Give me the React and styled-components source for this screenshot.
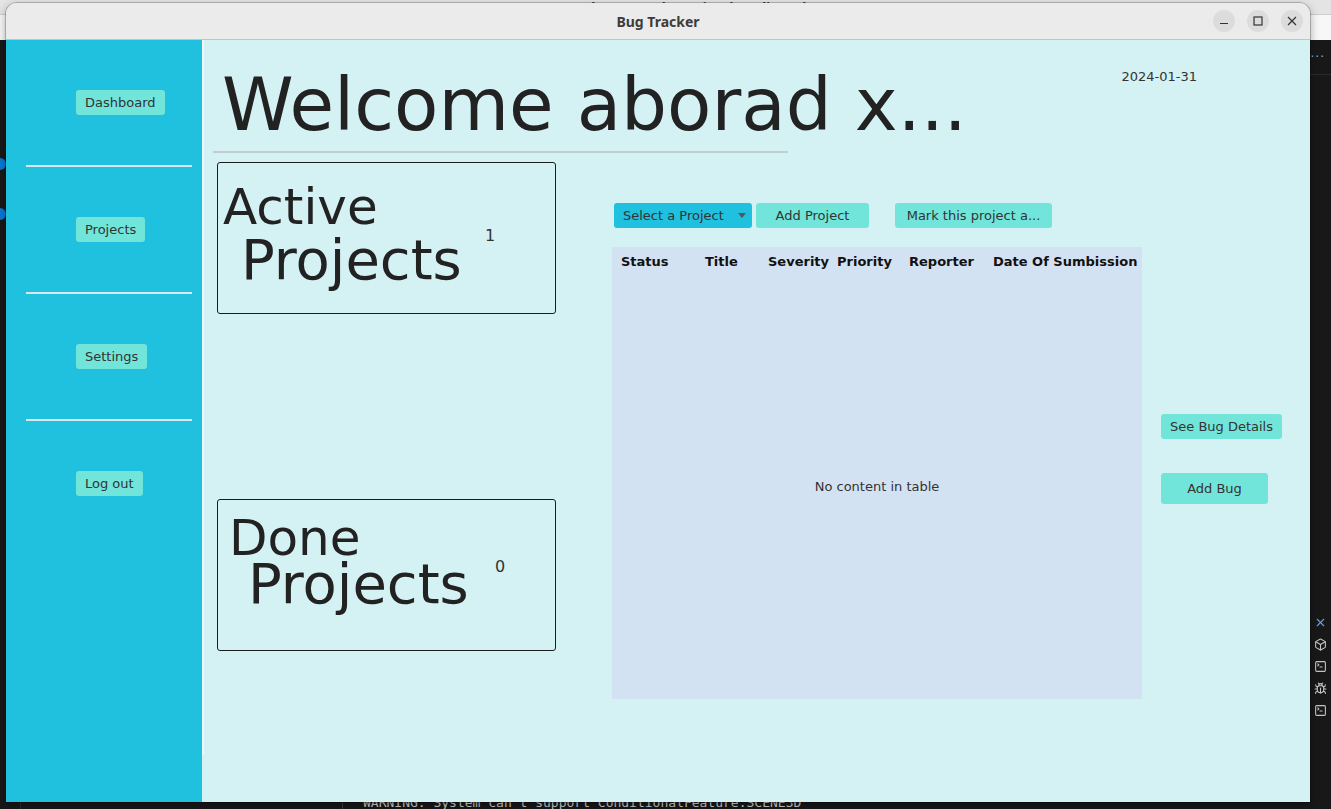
import React from "react";
import styled, { createGlobalStyle } from "styled-components";
import { X, Box, SquareTerminal, Bug } from "lucide-react";

const GlobalStyle = createGlobalStyle`
  html, body {
    margin: 0;
    padding: 0;
  }
  body {
    font-family: "DejaVu Sans", "Liberation Sans", sans-serif;
    background: #1f1f1f;
  }
`;

/* desktop behind the app window (editor window) */
const Desktop = styled.div`
  position: relative;
  width: 1331px;
  height: 809px;
  overflow: hidden;
  display: flex;
  flex-direction: column;
  background: #1f1f1f;
`;

const HostTitle = styled.div`
  height: 14px;
  flex: none;
  background: #e4e4e4;
  border-bottom: 1px solid #cdcdcd;
  text-align: center;
  font-family: "Noto Sans", sans-serif;
  font-weight: 700;
  font-size: 13px;
  line-height: 14px;
  color: #3a3a3a;
  overflow: hidden;

  span {
    display: inline-block;
    margin-top: -10px;
  }
`;

const HostMenu = styled.div`
  height: 25px;
  flex: none;
  background: #f7f7f7;
`;

const HostMain = styled.div`
  flex: 1;
  display: flex;
  min-height: 0;
`;

const ActivityBar = styled.div`
  width: 20px;
  flex: none;
  background: #181818;
  border-right: 1px solid #2b2b2b;
  display: flex;
  flex-direction: column;
  align-items: flex-start;
  gap: 38px;
  padding-top: 118px;
`;

const Badge = styled.div`
  width: 12px;
  height: 12px;
  border-radius: 50%;
  margin-left: -6px;
  background: #0a78d4;
`;

const EditorCol = styled.div`
  flex: 1;
  display: flex;
  flex-direction: column;
`;

const TabBar = styled.div`
  height: 34px;
  flex: none;
  background: #181818;
  border-bottom: 1px solid #2b2b2b;
  display: flex;
  justify-content: flex-end;
  align-items: center;
  padding-right: 6px;
  color: #8fa8c8;
  font-size: 12px;
  letter-spacing: 1px;
`;

const CodeArea = styled.div`
  flex: 1;
  display: flex;
`;

const CodeFill = styled.div`
  flex: 1;
`;

const RightRail = styled.div`
  width: 21px;
  flex: none;
  display: flex;
  flex-direction: column;
  align-items: center;
  gap: 9px;
  padding-top: 541px;
  color: #c5c5c5;
  background: #181818;
`;

const TerminalLine = styled.div`
  padding-left: 321px;
  height: 14px;
  flex: none;
  font-family: "DejaVu Sans Mono", "Liberation Mono", monospace;
  font-size: 13px;
  line-height: 16px;
  color: #cccccc;
  white-space: nowrap;
  background: #181818;
  overflow: hidden;

  span {
    display: inline-block;
    padding-left: 20px;
    border-left: 1px solid #3a3a3a;
    margin-top: -6px;
  }
`;

/* the app window */
const Window = styled.div`
  position: absolute;
  left: 6px;
  top: 3px;
  width: 1304px;
  height: 799px;
  border-radius: 11px 11px 0 0;
  overflow: hidden;
  display: flex;
  flex-direction: column;
  box-shadow: 0 0 0 1px rgba(0, 0, 0, 0.2), 0 3px 10px rgba(0, 0, 0, 0.35);
`;

const TitleBar = styled.header`
  height: 36px;
  flex: none;
  background: #ebebeb;
  border-bottom: 1px solid #c4c4c4;
  display: grid;
  grid-template-columns: 1fr auto 1fr;
  align-items: center;
`;

const WindowTitle = styled.div`
  grid-column: 2;
  font-family: "Noto Sans", sans-serif;
  font-weight: 700;
  font-size: 14px;
  color: #3c3c3c;
`;

const Controls = styled.div`
  justify-self: end;
  display: flex;
  gap: 12px;
  padding-right: 7px;
`;

const CtrlButton = styled.div`
  width: 22px;
  height: 22px;
  border-radius: 50%;
  background: #dcdcdc;
  display: flex;
  align-items: center;
  justify-content: center;
`;

const Content = styled.div`
  flex: 1;
  display: flex;
  min-height: 0;
  background: #d4f1f4;
`;

const Sidebar = styled.nav`
  width: 196px;
  flex: none;
  background: #20c0df;
  display: flex;
  flex-direction: column;
  align-items: flex-start;
  gap: 50px;
  padding-top: 50px;
`;

const Button = styled.button`
  border: none;
  border-radius: 3px;
  background: ${({ $tone }) => ($tone === "combo" ? "#20c0df" : "#72e5da")};
  color: #333333;
  font-family: "DejaVu Sans", sans-serif;
  font-size: 13px;
  line-height: 17px;
  height: ${({ $height }) => $height || 25}px;
  width: ${({ $width }) => ($width ? `${$width}px` : "auto")};
  padding: 0 9px;
  white-space: nowrap;
  flex: none;
  display: flex;
  align-items: center;
  justify-content: ${({ $align }) => ($align === "left" ? "space-between" : "center")};
`;

const NavButton = styled(Button)`
  margin-left: 70px;
`;

const NavRule = styled.div`
  width: 166px;
  height: 2px;
  margin-left: 20px;
  background: #d9e8ec;
`;

const VSep = styled.div`
  width: 2px;
  height: 715px;
  flex: none;
  background: #eef7f9;
`;

const Main = styled.main`
  flex: 1;
  display: flex;
  flex-direction: column;
  padding-left: 9px;
`;

const Header = styled.div`
  display: flex;
  align-items: flex-start;
`;

const TitleBlock = styled.div`
  width: 575px;
  margin-top: 23px;
  padding-bottom: 4px;
  border-bottom: 2px solid #c3cdce;
`;

const Heading = styled.h1`
  margin: 0;
  padding-left: 9px;
  font-family: "DejaVu Sans", sans-serif;
  font-weight: normal;
  font-size: 72.5px;
  line-height: 84px;
  color: #222222;
  white-space: nowrap;
`;

const DateLabel = styled.div`
  margin-left: auto;
  margin-right: 113px;
  margin-top: 28px;
  font-size: 13px;
  line-height: 17px;
  color: #333333;
`;

const Body = styled.div`
  display: flex;
  align-items: flex-start;
`;

const LeftCol = styled.div`
  margin-left: 4px;
  margin-top: 9px;
  display: flex;
  flex-direction: column;
  gap: 185px;
`;

const StatBox = styled.section`
  width: 339px;
  height: 152px;
  box-sizing: border-box;
  border: 1px solid #1c1c1c;
  border-radius: 3px;
  display: flex;
  align-items: flex-start;
  padding-top: ${({ $top }) => $top}px;
  padding-left: ${({ $left }) => $left}px;
`;

const StatTitle = styled.div`
  width: ${({ $width }) => $width}px;
  flex: none;
  color: #222222;
  white-space: nowrap;
`;

const StatLine = styled.div`
  font-size: 50px;
  line-height: 58px;
`;

const StatLineBig = styled.div`
  font-size: 56px;
  line-height: 52px;
  padding-left: ${({ $indent }) => $indent}px;
  margin-top: ${({ $shift }) => $shift}px;
`;

const StatCount = styled.div`
  margin-top: 48px;
  font-size: 16px;
  line-height: 19px;
  color: #333333;
`;

const MidCol = styled.div`
  margin-left: 56px;
  margin-top: 50px;
  display: flex;
  flex-direction: column;
`;

const Toolbar = styled.div`
  display: flex;
  padding-left: 2px;
  gap: 4px;
`;

const Caret = styled.span`
  width: 0;
  height: 0;
  border-left: 4px solid transparent;
  border-right: 4px solid transparent;
  border-top: 5px solid #555555;
  margin-left: 14px;
`;

const MarkButton = styled(Button)`
  margin-left: 22px;
`;

const Table = styled.div`
  margin-top: 19px;
  width: 530px;
  height: 452px;
  background: #d3e2f2;
  display: flex;
  flex-direction: column;
`;

const HeaderRow = styled.div`
  display: grid;
  grid-template-columns: 84px 63px 69px 72px 84px 1fr;
  padding: 6px 0 0 9px;
  height: 30px;
  box-sizing: border-box;
  font-weight: 700;
  font-size: 13px;
  line-height: 17px;
  color: #111111;
  white-space: nowrap;
`;

const EmptyNote = styled.div`
  flex: 1;
  display: flex;
  align-items: center;
  justify-content: center;
  font-size: 13px;
  color: #333333;
  padding-bottom: 4px;
`;

const RightCol = styled.div`
  margin-left: 19px;
  margin-top: 261px;
  display: flex;
  flex-direction: column;
  align-items: flex-start;
  gap: 34px;
`;

const navItems = ["Dashboard", "Projects", "Settings", "Log out"];
const columns = ["Status", "Title", "Severity", "Priority", "Reporter", "Date Of Sumbission"];

const stats = [
  { first: "Active", count: 1, top: 15, left: 5, width: 262, indent: 18, shift: -2 },
  { first: "Done", count: 0, top: 9, left: 11, width: 266, indent: 19, shift: -9 },
];

function App() {
  return (
    <Desktop>
      <GlobalStyle />
      <HostTitle>
        <span>README.md - Bug Tracker - Visual Studio Code</span>
      </HostTitle>
      <HostMenu />
      <HostMain>
        <ActivityBar>
          <Badge />
          <Badge />
        </ActivityBar>
        <EditorCol>
          <TabBar>···</TabBar>
          <CodeArea>
            <CodeFill />
            <RightRail>
              <X size={13} color="#6aa0d8" />
              <Box size={13} />
              <SquareTerminal size={13} />
              <Bug size={13} />
              <SquareTerminal size={13} />
            </RightRail>
          </CodeArea>
          <TerminalLine>
            <span>WARNING: System can't support ConditionalFeature.SCENE3D</span>
          </TerminalLine>
        </EditorCol>
      </HostMain>

      <Window>
        <TitleBar>
          <WindowTitle>Bug Tracker</WindowTitle>
          <Controls>
            <CtrlButton>
              <svg width="10" height="10" viewBox="0 0 10 10">
                <path d="M1 7.5h8" stroke="#333" strokeWidth="1.2" />
              </svg>
            </CtrlButton>
            <CtrlButton>
              <svg width="10" height="10" viewBox="0 0 10 10">
                <rect x="1" y="1" width="8" height="8" fill="none" stroke="#333" strokeWidth="1.2" />
              </svg>
            </CtrlButton>
            <CtrlButton>
              <svg width="10" height="10" viewBox="0 0 10 10">
                <path d="M1 1l8 8M9 1l-8 8" stroke="#333" strokeWidth="1.2" />
              </svg>
            </CtrlButton>
          </Controls>
        </TitleBar>

        <Content>
          <Sidebar>
            {navItems.map((item, i) => (
              <React.Fragment key={item}>
                {i > 0 && <NavRule />}
                <NavButton>{item}</NavButton>
              </React.Fragment>
            ))}
          </Sidebar>
          <VSep />

          <Main>
            <Header>
              <TitleBlock>
                <Heading>Welcome aborad x...</Heading>
              </TitleBlock>
              <DateLabel>2024-01-31</DateLabel>
            </Header>

            <Body>
              <LeftCol>
                {stats.map((s) => (
                  <StatBox key={s.first} $top={s.top} $left={s.left}>
                    <StatTitle $width={s.width}>
                      <StatLine>{s.first}</StatLine>
                      <StatLineBig $indent={s.indent} $shift={s.shift}>
                        Projects
                      </StatLineBig>
                    </StatTitle>
                    <StatCount>{s.count}</StatCount>
                  </StatBox>
                ))}
              </LeftCol>

              <MidCol>
                <Toolbar>
                  <Button $tone="combo" $width={138} $align="left">
                    Select a Project
                    <Caret />
                  </Button>
                  <Button $width={113}>Add Project</Button>
                  <MarkButton $width={157}>Mark this project a...</MarkButton>
                </Toolbar>
                <Table>
                  <HeaderRow>
                    {columns.map((c) => (
                      <span key={c}>{c}</span>
                    ))}
                  </HeaderRow>
                  <EmptyNote>No content in table</EmptyNote>
                </Table>
              </MidCol>

              <RightCol>
                <Button>See Bug Details</Button>
                <Button $width={107} $height={31}>
                  Add Bug
                </Button>
              </RightCol>
            </Body>
          </Main>
        </Content>
      </Window>
    </Desktop>
  );
}

export default App;
